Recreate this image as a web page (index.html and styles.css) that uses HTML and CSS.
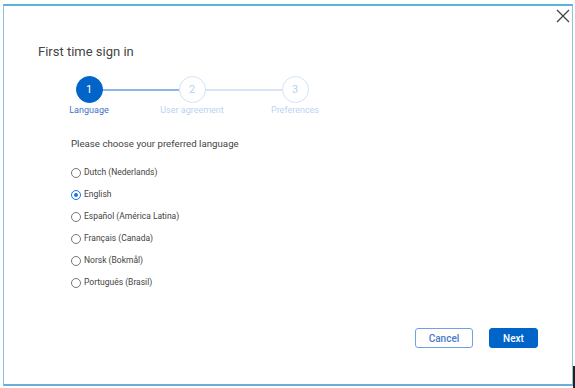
FILE: index.html
```html
<!DOCTYPE html>
<html>
<head>
<meta charset="utf-8">
<link rel="stylesheet" href="styles.css">
</head>
<body>
<div class="frame">
  <div class="dialog">
    <button class="close" aria-label="Close">
      <svg width="14" height="14" viewBox="0 0 14 14"><path d="M1 1L13 13M13 1L1 13" stroke="#444" stroke-width="1.3" fill="none"/></svg>
    </button>
    <h1 class="title">First time sign in</h1>
    <div class="stepper">
      <div class="step active">
        <div class="circle">1</div>
        <div class="label">Language</div>
      </div>
      <div class="bar bar-done"></div>
      <div class="step">
        <div class="circle">2</div>
        <div class="label">User agreement</div>
      </div>
      <div class="bar"></div>
      <div class="step">
        <div class="circle">3</div>
        <div class="label">Preferences</div>
      </div>
    </div>
    <div class="content">
      <p class="prompt">Please choose your preferred language</p>
      <div class="options">
        <label class="opt"><span class="radio"></span>Dutch (Nederlands)</label>
        <label class="opt"><span class="radio checked"></span>English</label>
        <label class="opt"><span class="radio"></span>Español (América Latina)</label>
        <label class="opt"><span class="radio"></span>Français (Canada)</label>
        <label class="opt"><span class="radio"></span>Norsk (Bokmål)</label>
        <label class="opt"><span class="radio"></span>Português (Brasil)</label>
      </div>
    </div>
    <div class="actions">
      <button class="btn btn-secondary">Cancel</button>
      <button class="btn btn-primary">Next</button>
    </div>
  </div>
</div>
<div class="edge"></div>
</body>
</html>
```
FILE: styles.css
```css
* { box-sizing: border-box; }
html, body { margin: 0; padding: 0; background: #fff; }
body {
  font-family: Roboto, "Liberation Sans", sans-serif;
  width: 575px;
  height: 388px;
  position: relative;
  overflow: hidden;
}
.frame {
  margin: 4px 0 0 3px;
  width: 570px;
  height: 382px;
  border-top: 2px solid #5cb3d9;
  border-left: 1px solid #8cc4e0;
  border-right: 1px solid #8cc4e0;
  border-bottom: 2px solid #6aaed6;
}
.dialog {
  position: relative;
  height: 100%;
  display: flex;
  flex-direction: column;
  padding: 0 34px 0 34px;
}
.close {
  position: absolute;
  right: 0;
  top: 1px;
  width: 18px;
  height: 18px;
  padding: 2px;
  border: 0;
  background: none;
  display: flex;
  align-items: center;
  justify-content: center;
}
.title {
  margin: 38px 0 0 0;
  font-size: 13px;
  font-weight: 400;
  color: #444;
  line-height: 16px;
}
.stepper {
  display: flex;
  align-items: flex-start;
  margin: 16px 0 0 38px;
}
.step {
  width: 64px;
  display: flex;
  flex-direction: column;
  align-items: center;
  margin: 0 -19px;
  position: relative;
  z-index: 1;
}
.circle {
  width: 27px;
  height: 27px;
  border-radius: 50%;
  border: 1.5px solid #cfe2f6;
  color: #b9d3f0;
  font-size: 11px;
  display: flex;
  align-items: center;
  justify-content: center;
  background: #fff;
}
.label {
  margin-top: 2px;
  font-size: 9px;
  color: #bcd4f0;
  white-space: nowrap;
}
.step.active .circle {
  background: #0064c8;
  border-color: #0064c8;
  color: #fff;
}
.step.active .label { color: #3e73c4; }
.bar {
  width: 77px;
  height: 1.5px;
  margin-top: 13px;
  background: #d5e5f6;
  position: relative;
  z-index: 0;
}
.bar-done { background: #8fb5e6; }
.content { margin-left: 33px; }
.prompt {
  margin: 22px 0 0 0;
  font-size: 9.7px;
  color: #444;
  line-height: 14px;
}
.options {
  display: flex;
  flex-direction: column;
  gap: 9px;
  margin-top: 15px;
}
.opt {
  display: flex;
  align-items: center;
  gap: 3px;
  font-size: 8.5px;
  color: #444;
  line-height: 13px;
  height: 13px;
}
.radio {
  width: 10px;
  height: 10px;
  border-radius: 50%;
  border: 1px solid #777;
  background: #fff;
  flex: none;
  position: relative;
}
.radio.checked {
  border-color: #1a73e8;
}
.radio.checked::after {
  content: "";
  position: absolute;
  left: 2px;
  top: 2px;
  width: 4px;
  height: 4px;
  border-radius: 50%;
  background: #1a73e8;
}
.actions {
  margin-top: auto;
  margin-bottom: 36px;
  display: flex;
  justify-content: flex-end;
  gap: 16px;
}
.btn {
  font-family: Roboto, "Liberation Sans", sans-serif;
  font-size: 10px;
  font-weight: 500;
  height: 20px;
  border-radius: 3px;
  padding: 0;
}
.btn-secondary {
  width: 58px;
  background: #fff;
  border: 1px solid #6ea2e3;
  color: #4a7ac6;
}
.btn-primary {
  width: 49px;
  background: #0064c8;
  border: 1px solid #0064c8;
  color: #fff;
}
.edge {
  position: absolute;
  left: 573px;
  top: 366px;
  width: 2px;
  height: 22px;
  background: #222;
}
```
